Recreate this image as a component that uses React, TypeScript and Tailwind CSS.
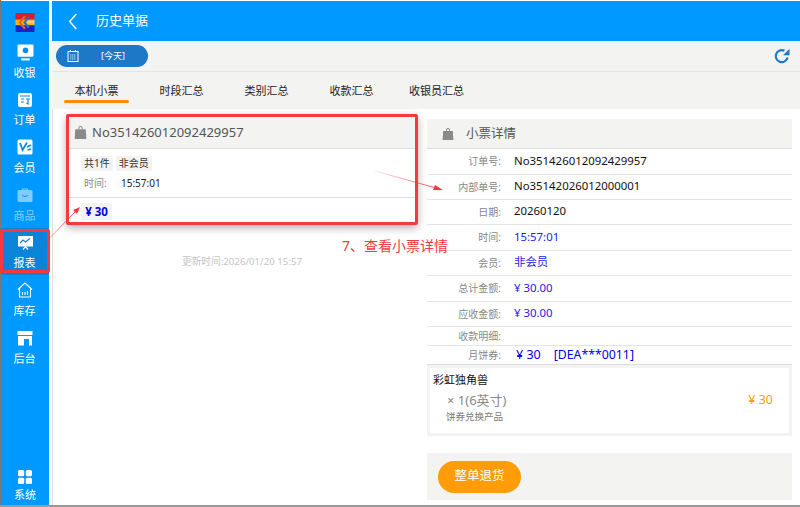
import React from 'react'

const FONT = 'font-["Noto_Sans","Noto_Sans_CJK_SC",sans-serif]'

const Bag = ({ className }: { className?: string }) => (
  <svg viewBox="0 0 12 12" className={className} fill="#8a8a8a">
    <path d="M4 3V2a2 2 0 0 1 4 0v1h-.9V2a1.1 1.1 0 0 0-2.2 0v1z" />
    <path d="M1.2 3h9.6l.6 8.2a.7.7 0 0 1-.7.8H1.3a.7.7 0 0 1-.7-.8z" />
  </svg>
)

const Logo = () => (
  <svg viewBox="0 0 20 20" className="w-5 h-[19px]">
    <rect width="20" height="7" fill="#d81e2c" />
    <rect y="7" width="20" height="6" fill="#f4b417" />
    <rect y="13" width="20" height="7" fill="#1a22c8" />
    <path d="M3 10 9 3l2 1-5 6 5 6-2 1z" fill="#e8641e" />
    <path d="M8 10l5-6 2 1-4 5 4 5-2 1z" fill="#2a6fd0" />
    <path d="M12 8h8v3h-8z" fill="#e9e9e9" opacity=".5" />
  </svg>
)

const CashIcon = () => (
  <svg viewBox="0 0 16 16" className="w-[17px] h-[17px]">
    <rect x="0.5" y="0.5" width="15" height="11.5" rx="1" fill="#fff" />
    <rect x="4" y="13.5" width="8" height="2" fill="#fff" />
    <circle cx="8" cy="6" r="2.6" fill="#0a8ae6" />
  </svg>
)

const OrderIcon = () => (
  <svg viewBox="0 0 16 16" className="w-4 h-4">
    <rect x="1" y="1" width="14" height="14" rx="2" fill="#fff" />
    <path d="M3 4h10M4 7h3M4 10h3M9 7h4M11 7v5l-1.5-1" stroke="#0a8ae6" strokeWidth="1.2" fill="none" />
  </svg>
)

const MemberIcon = () => (
  <svg viewBox="0 0 16 16" className="w-4 h-4">
    <rect x="0.5" y="0.5" width="15" height="15" rx="1.5" fill="#fff" />
    <path d="M3 4l2.6 7L10 3.5M10 8l4-2M10.5 11l3.5-1" stroke="#0a8ae6" strokeWidth="1.8" fill="none" />
  </svg>
)

const GoodsIcon = () => (
  <svg viewBox="0 0 16 16" className="w-4 h-4 opacity-50">
    <path d="M5 3V1.5h6V3h-1V2.500H6V3z" fill="#fff" />
    <rect x="0.500" y="3" width="15" height="12" rx="1.5" fill="#fff" />
    <path d="M5 8c1 2 5 2 6 0" stroke="#0a8ae6" strokeWidth="1" fill="none" />
  </svg>
)

const ReportIcon = () => (
  <svg viewBox="0 0 17 16" className="w-[17px] h-4">
    <rect x="1" y="1" width="15" height="10.500" fill="#fff" />
    <path d="M3 8l3-3 2.500 2L13 3.500" stroke="#0a84d8" strokeWidth="1.2" fill="none" />
    <path d="M6 14.500l2.500-3 2.500 3" stroke="#fff" strokeWidth="1.2" fill="none" />
  </svg>
)

const StoreIcon = () => (
  <svg viewBox="0 0 16 16" className="w-4 h-4" fill="none" stroke="#fff" strokeWidth="1.1">
    <path d="M1 7.500 8 1l7 6.500M2.500 6.500V15h11V6.500" />
    <path d="M5.500 10v3M8 10v3M10.500 9v4" />
  </svg>
)

const BackIcon = () => (
  <svg viewBox="0 0 16 16" className="w-4 h-4">
    <rect x="0.500" y="1" width="15" height="4" fill="#fff" />
    <path d="M1 6h14v9.500h-3V9H7v6.500H1z" fill="#fff" />
  </svg>
)

const GridIcon = () => (
  <svg viewBox="0 0 14 14" className="w-[14px] h-[14px]" fill="#fff">
    <rect width="6.200" height="6.200" rx="1.500" />
    <rect x="7.800" width="6.200" height="6.200" rx="1.500" />
    <rect y="7.800" width="6.200" height="6.200" rx="1.500" />
    <rect x="7.800" y="7.800" width="6.200" height="6.200" rx="1.500" />
  </svg>
)

const CalendarIcon = () => (
  <svg viewBox="0 0 12 12" className="w-3 h-3" fill="none" stroke="#fff">
    <rect x="1" y="1.500" width="10" height="10" strokeWidth="1" />
    <path d="M3.500 0v2M8.500 0v2" strokeWidth="1" />
    <path d="M3 5h6M3 7h6M3 9h6" strokeWidth=".8" strokeDasharray="1.300 .6" />
  </svg>
)

const RefreshIcon = () => (
  <svg viewBox="0 0 16 16" className="h-4 w-4" fill="none">
    <path d="M13.600 9.500A6 6 0 1 1 10.500 2.800" stroke="#1e78c8" strokeWidth="2.200" />
    <path d="M15.500 0.800V7.200H9z" fill="#1e78c8" />
  </svg>
)

const navItems = [
  { label: '收银', icon: <CashIcon /> },
  { label: '订单', icon: <OrderIcon /> },
  { label: '会员', icon: <MemberIcon /> },
  { label: '商品', icon: <GoodsIcon />, dim: true },
  { label: '报表', icon: <ReportIcon />, active: true },
  { label: '库存', icon: <StoreIcon /> },
  { label: '后台', icon: <BackIcon /> },
]

const tabs = ['本机小票', '时段汇总', '类别汇总', '收款汇总', '收银员汇总']

const rows = [
  { label: '订单号:', value: 'No351426012092429957', cls: 'text-[#111]', h: 'h-[26px]' },
  { label: '内部单号:', value: 'No35142026012000001', cls: 'text-[#111]', h: 'h-[25px]' },
  { label: '日期:', value: '20260120', cls: 'text-[#111]', h: 'h-[25px]' },
  { label: '时间:', value: '15:57:01', cls: 'text-[#2222ee]', h: 'h-[26px]' },
  { label: '会员:', value: '非会员', cls: 'text-[#2222ee]', h: 'h-[25px]' },
  { label: '总计金额:', value: '¥ 30.00', cls: 'text-[#2222ee]', h: 'h-[26px]' },
  { label: '应收金额:', value: '¥ 30.00', cls: 'text-[#2222ee]', h: 'h-[25px]' },
  { label: '收款明细:', value: '', cls: '', h: 'h-[19px]' },
]

export default function App() {
  return (
    <div className={`relative h-[507px] w-[800px] overflow-hidden bg-[#999] ${FONT}`}>
      <div className="flex h-[505px] bg-white border-l border-[#777] pt-px">
        {/* sidebar */}
        <aside className="flex w-[48px] flex-col bg-[#0099ff] text-white">
          <div className="flex h-[36px] items-start justify-center pt-[12px]">
            <Logo />
          </div>
          {navItems.map((n) => (
            <div
              key={n.label}
              className={`flex h-[47.7px] flex-col items-center justify-between pt-[7px] pb-[4px] ${n.active ? 'bg-[#0a84d8]' : ''}`}
            >
              {n.icon}
              <span className={`pr-[1px] text-[11px] leading-[16px] ${n.dim ? 'opacity-50' : ''}`}>{n.label}</span>
            </div>
          ))}
          <div className="mt-auto flex flex-col items-center pb-[2px]">
            <GridIcon />
            <span className="mt-[3px] text-[11px] leading-[16px]">系统</span>
          </div>
        </aside>

        <main className="ml-[3px] flex min-w-0 flex-1 flex-col">
          <header className="flex h-[40px] items-center bg-[#0099ff] text-white">
            <svg viewBox="0 0 10 18" className="ml-[16px] h-[17px] w-[10px]" fill="none" stroke="#fff" strokeWidth="1.500">
              <path d="M8.500 1 1.500 9l7 8" />
            </svg>
            <span className="ml-[18px] text-[13px]">历史单据</span>
          </header>

          <div className="flex h-[31px] items-center justify-between border-b border-[#e4e4e4] bg-[#f3f3f2] pl-[4px] pr-[10px]">
            <div className="flex h-[22px] w-[92px] items-center rounded-[11px] bg-[#1e78c8] pl-[11px] text-white">
              <CalendarIcon />
              <span className="ml-[22px] text-[9px]">[今天]</span>
            </div>
            <RefreshIcon />
          </div>

          <nav className="flex h-[37px] bg-[#f3f3f2] pl-[2px]">
            {tabs.map((t, i) => (
              <div key={t} className="relative flex w-[85px] items-center justify-center pt-[1px] text-[11px] text-[#222]">
                {t}
                {i === 0 && (
                  <span className="absolute bottom-[6px] left-[10px] h-[3px] w-[65px] rounded-full bg-[#ff8c00]" />
                )}
              </div>
            ))}
          </nav>

          <div className="flex min-h-0 flex-1">
            {/* ticket list */}
            <section className="w-[375px] border-l border-[#ddd] pl-[13px] pt-[5px]">
              <div className="h-[111px] w-[352px] rounded-[2px] border-[3px] border-[#f53a3f] bg-white shadow-[0_3px_8px_rgba(0,0,0,0.3)]">
                <div className="flex h-[32px] items-center border-b border-[#ddd] bg-[#f3f3f2] pl-[5px]">
                  <Bag className="h-[13px] w-[13px]" />
                  <span className="ml-[5px] text-[13px] text-[#555]">No351426012092429957</span>
                </div>
                <div className="h-[49px] border-b border-[#ddd] pl-[12px] pt-[7px]">
                  <div className="flex gap-[3px] text-[10px] text-[#333]">
                    <span className="flex h-[15px] items-center rounded-[2px] bg-[#f3f3f2] px-[3px]">共1件</span>
                    <span className="flex h-[15px] items-center rounded-[2px] bg-[#f3f3f2] px-[3px]">非会员</span>
                  </div>
                  <div className="mt-[4px] flex items-center text-[10px] leading-[16px]">
                    <span className="ml-[3px] w-[37px] text-[#888]">时间:</span>
                    <span className="text-[#222]">15:57:01</span>
                  </div>
                </div>
                <div className="pl-[12px] pt-[5px]">
                  <div className="flex h-[17px] w-[31px] items-center justify-center rounded-[2px] bg-[#f3f3f2] text-[11.500px] font-bold text-[#0000ee]">
                    ¥ 30
                  </div>
                </div>
              </div>
              <p className="mt-[30px] w-[352px] text-center text-[9.700px] leading-[14px] text-[#c4c4c4]">
                更新时间:2026/01/20 15:57
              </p>
            </section>

            {/* ticket detail */}
            <section className="w-[365px] pt-[10px]">
              <div className="flex h-[30px] items-center border-b border-[#ddd] bg-[#f3f3f2] pl-[15px]">
                <Bag className="h-[12px] w-[12px]" />
                <span className="ml-[12px] pt-[1px] text-[12.500px] text-[#555]">小票详情</span>
              </div>
              {rows.map((r) => (
                <div key={r.label} className={`flex items-center border-b border-[#e4e4e4] ${r.h}`}>
                  <span className="w-[74px] text-right text-[10px] text-[#888]">{r.label}</span>
                  <span className={`ml-[13px] pb-[2px] text-[11.400px] ${r.cls}`}>{r.value}</span>
                </div>
              ))}
              <div className="flex h-[19px] items-center border-b border-[#ddd]">
                <span className="w-[74px] text-right text-[10px] text-[#888]">月饼券:</span>
                <span className="ml-[15px] text-[12.500px] text-[#0000ee]">¥ 30</span>
                <span className="ml-[13px] text-[12.300px] text-[#0000ee]">[DEA***0011]</span>
              </div>
              <div className="flex h-[71px] justify-between border-[3px] border-[#f3f3f2] pl-[3px] pr-[16px]">
                <div className="pt-[4px]">
                  <div className="text-[11px] leading-[16px] text-[#111]">彩虹独角兽</div>
                  <div className="ml-[14px] mt-[2.500px] text-[13px] leading-[19px] text-[#888]">× 1(6英寸)</div>
                  <div className="ml-[13px] text-[9.500px] leading-[14px] text-[#777]">饼券兑换产品</div>
                </div>
                <span className="self-center text-[12.500px] text-[#ff9c07]">¥ 30</span>
              </div>
              <div className="mt-[17px] flex h-[47px] items-center bg-[#f3f3f2] pl-[11px]">
                <button className="h-[32px] w-[83px] rounded-[16px] bg-[#ff9c07] text-[12.500px] text-white">
                  整单退货
                </button>
              </div>
            </section>
          </div>
        </main>
      </div>

      {/* tutorial annotations */}
      <div className="pointer-events-none absolute left-0 top-[229px] h-[44px] w-[50px] rounded-[2px] border-[3px] border-[#f53a3f]" />
      <svg className="pointer-events-none absolute inset-0 h-full w-full" viewBox="0 0 800 507">
        <defs>
          <linearGradient id="a1" x1="375" y1="171" x2="443" y2="190" gradientUnits="userSpaceOnUse">
            <stop offset="0" stopColor="#f53a3f" stopOpacity="0.1" />
            <stop offset="1" stopColor="#f53a3f" />
          </linearGradient>
          <linearGradient id="a2" x1="35" y1="253" x2="80" y2="207" gradientUnits="userSpaceOnUse">
            <stop offset="0" stopColor="#f53a3f" stopOpacity="0.2" />
            <stop offset="1" stopColor="#f53a3f" />
          </linearGradient>
        </defs>
        <path d="M375 171 436 188" stroke="url(#a1)" strokeWidth="1" fill="none" />
        <path d="M443 190 433 190 435 185z" fill="#f53a3f" />
        <path d="M35 253 76 211" stroke="url(#a2)" strokeWidth="1" fill="none" />
        <path d="M80 207 77 214 73 210z" fill="#f53a3f" />
      </svg>
      <span className="absolute left-[342px] top-[236px] text-[14px] leading-[20px] text-[#f53a3f]">7、查看小票详情</span>
    </div>
  )
}
